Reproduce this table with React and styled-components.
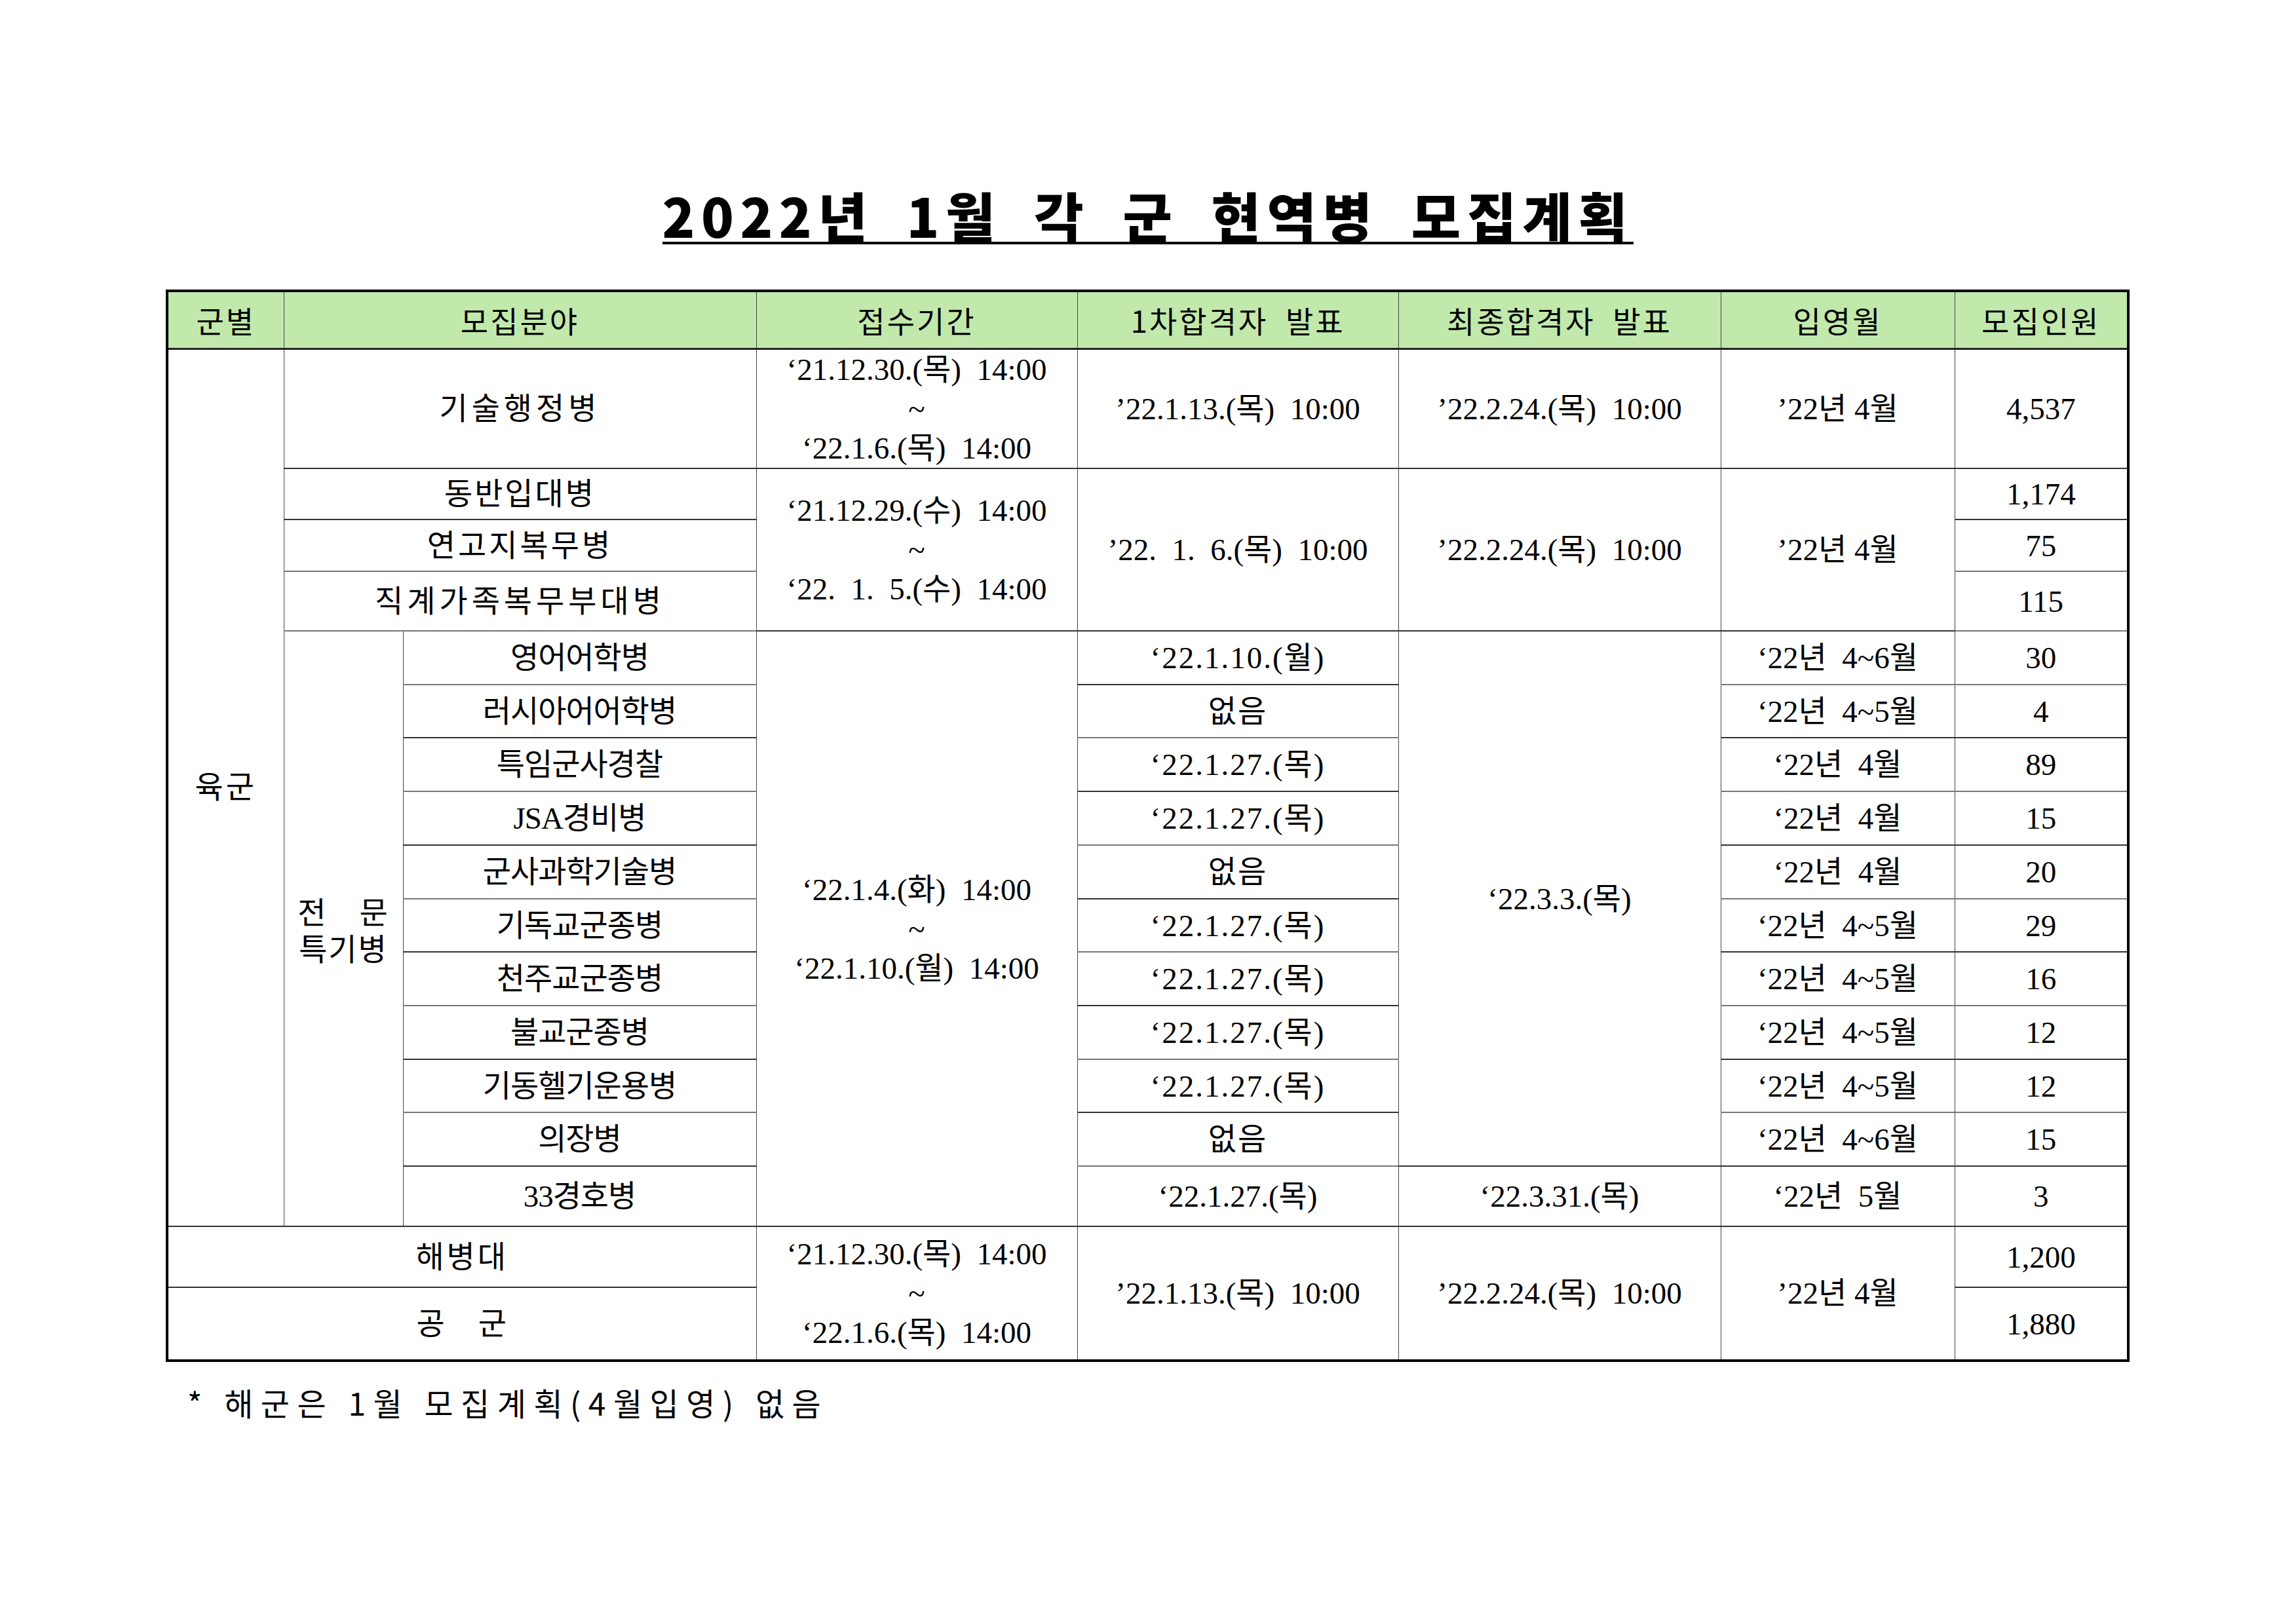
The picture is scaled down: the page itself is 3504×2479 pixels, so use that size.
import React from 'react';
import styled, { createGlobalStyle } from 'styled-components';

const GlobalStyle = createGlobalStyle`
  html, body {
    margin: 0;
    padding: 0;
    background: #ffffff;
  }
  body {
    font-family: "Noto Sans CJK KR", "Noto Sans", sans-serif;
    color: #000;
  }
`;

const Page = styled.div`
  width: 3504px;
  height: 2479px;
  padding-top: 287px;
  box-sizing: border-box;
  background: #fff;
`;

const TitleWrap = styled.div`
  text-align: center;
`;

const Title = styled.h1`
  display: inline-block;
  margin: 0;
  font-family: "Noto Sans CJK KR", sans-serif;
  font-weight: 900;
  font-size: 82px;
  line-height: 82px;
  letter-spacing: 9.5px;
  word-spacing: 22px;
  border-bottom: 4px solid #000;
  white-space: pre;
`;

const Table = styled.table`
  margin: 69px 0 0 253px;
  width: 2997px;
  table-layout: fixed;
  border-collapse: collapse;
  border: 4px solid #000;
`;

const Col = styled.col`
  width: ${p => p.$w}px;
`;

const Row = styled.tr`
  height: ${p => p.$h}px;
`;

const Th = styled.th`
  background: #c1e9ab;
  font-family: "Noto Sans CJK KR", sans-serif;
  font-weight: 400;
  font-size: 46px;
  letter-spacing: 3px;
  white-space: pre;
  border-left: 1px solid #444;
  border-right: 1px solid #444;
  border-bottom: 3px solid #222;
  padding: 0;
  text-align: center;
  vertical-align: middle;
`;

const Cell = styled.td`
  font-family: "Liberation Serif", "Noto Sans CJK KR", serif;
  font-size: 47px;
  line-height: 60px;
  white-space: pre;
  text-align: center;
  vertical-align: middle;
  padding: 0;
  border-left: 1px solid #444;
  border-right: 1px solid #444;
  border-top: 2px solid ${p => (p.$soft ? '#777' : '#333')};
  border-bottom: 2px solid ${p => (p.$soft ? '#777' : '#333')};
`;

const NameCell = styled(Cell)`
  letter-spacing: ${p => p.$ls ?? 2}px;
`;

const GroupLabel = styled.div`
  font-family: "Noto Sans CJK KR", sans-serif;
  font-size: 47px;
  line-height: 56px;
  letter-spacing: 2px;
  white-space: pre;
  text-align: center;
`;

const Note = styled.p`
  margin: 37px 0 0 286px;
  font-family: "Noto Sans CJK KR", sans-serif;
  font-size: 48px;
  line-height: 48px;
  letter-spacing: 11.5px;
  white-space: pre;
`;

const columns = [178, 182, 539, 490, 490, 492, 357, 265];

const specialRows = [
  { name: '영어어학병', first: '‘22.1.10.(월)', month: '‘22년  4~6월', count: '30', h: 82 },
  { name: '러시아어어학병', first: '없음', month: '‘22년  4~5월', count: '4', h: 81 },
  { name: '특임군사경찰', first: '‘22.1.27.(목)', month: '‘22년  4월', count: '89', h: 82 },
  { name: 'JSA경비병', first: '‘22.1.27.(목)', month: '‘22년  4월', count: '15', h: 82 },
  { name: '군사과학기술병', first: '없음', month: '‘22년  4월', count: '20', h: 82 },
  { name: '기독교군종병', first: '‘22.1.27.(목)', month: '‘22년  4~5월', count: '29', h: 81 },
  { name: '천주교군종병', first: '‘22.1.27.(목)', month: '‘22년  4~5월', count: '16', h: 82 },
  { name: '불교군종병', first: '‘22.1.27.(목)', month: '‘22년  4~5월', count: '12', h: 82 },
  { name: '기동헬기운용병', first: '‘22.1.27.(목)', month: '‘22년  4~5월', count: '12', h: 81 },
  { name: '의장병', first: '없음', month: '‘22년  4~6월', count: '15', h: 82 },
];

const App = () => {
  return (
    <Page>
      <GlobalStyle />
      <TitleWrap>
        <Title>2022년 1월 각 군 현역병 모집계획</Title>
      </TitleWrap>

      <Table>
        <colgroup>
          {columns.map((w, i) => (
            <Col key={i} $w={w} />
          ))}
        </colgroup>
        <thead>
          <Row $h={88}>
            <Th>군별</Th>
            <Th colSpan={2}>모집분야</Th>
            <Th>접수기간</Th>
            <Th>1차합격자  발표</Th>
            <Th>최종합격자  발표</Th>
            <Th>입영월</Th>
            <Th>모집인원</Th>
          </Row>
        </thead>
        <tbody>
          <Row $h={183}>
            <NameCell rowSpan={15} $ls={4}>육군</NameCell>
            <NameCell colSpan={2} $ls={6}>기술행정병</NameCell>
            <Cell>{'‘21.12.30.(목)  14:00\n~\n‘22.1.6.(목)  14:00'}</Cell>
            <Cell>’22.1.13.(목)  10:00</Cell>
            <Cell>’22.2.24.(목)  10:00</Cell>
            <Cell>’22년 4월</Cell>
            <Cell>4,537</Cell>
          </Row>
          <Row $h={78}>
            <NameCell colSpan={2} $ls={3}>동반입대병</NameCell>
            <Cell rowSpan={3}>{'‘21.12.29.(수)  14:00\n~\n‘22.  1.  5.(수)  14:00'}</Cell>
            <Cell rowSpan={3}>’22.  1.  6.(목)  10:00</Cell>
            <Cell rowSpan={3}>’22.2.24.(목)  10:00</Cell>
            <Cell rowSpan={3}>’22년 4월</Cell>
            <Cell>1,174</Cell>
          </Row>
          <Row $h={79}>
            <NameCell colSpan={2} $soft $ls={4}>연고지복무병</NameCell>
            <Cell $soft>75</Cell>
          </Row>
          <Row $h={91}>
            <NameCell colSpan={2} $soft $ls={6}>직계가족복무부대병</NameCell>
            <Cell $soft>115</Cell>
          </Row>

          {specialRows.map((r, i) => (
            <Row key={r.name} $h={r.h}>
              {i === 0 && (
                <Cell rowSpan={11}>
                  <GroupLabel>{'전　문\n특기병'}</GroupLabel>
                </Cell>
              )}
              <NameCell $soft={i % 2 === 0} $ls={-1}>{r.name}</NameCell>
              {i === 0 && (
                <Cell rowSpan={11}>{'‘22.1.4.(화)  14:00\n~\n‘22.1.10.(월)  14:00'}</Cell>
              )}
              <NameCell $soft={i % 2 === 1}>{r.first}</NameCell>
              {i === 0 && <Cell rowSpan={10}>‘22.3.3.(목)</Cell>}
              <Cell $soft={i % 2 === 0}>{r.month}</Cell>
              <Cell $soft={i % 2 === 0}>{r.count}</Cell>
            </Row>
          ))}

          <Row $h={92}>
            <NameCell $ls={-1}>33경호병</NameCell>
            <Cell>‘22.1.27.(목)</Cell>
            <Cell>‘22.3.31.(목)</Cell>
            <Cell>‘22년  5월</Cell>
            <Cell>3</Cell>
          </Row>
          <Row $h={93}>
            <NameCell colSpan={3} $ls={4}>해병대</NameCell>
            <Cell rowSpan={2}>{'‘21.12.30.(목)  14:00\n~\n‘22.1.6.(목)  14:00'}</Cell>
            <Cell rowSpan={2}>’22.1.13.(목)  10:00</Cell>
            <Cell rowSpan={2}>’22.2.24.(목)  10:00</Cell>
            <Cell rowSpan={2}>’22년 4월</Cell>
            <Cell>1,200</Cell>
          </Row>
          <Row $h={112}>
            <NameCell colSpan={3} $soft>공　군</NameCell>
            <Cell $soft>1,880</Cell>
          </Row>
        </tbody>
      </Table>

      <Note>* 해군은 1월 모집계획(4월입영) 없음</Note>
    </Page>
  );
};

export default App;
